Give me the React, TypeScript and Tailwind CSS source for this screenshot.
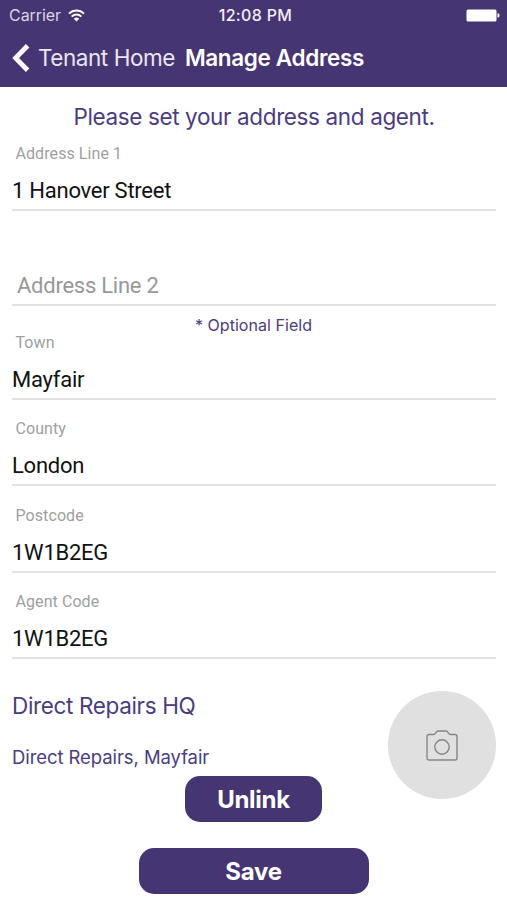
import { ChangeEvent, useState } from 'react';
import clsx from 'clsx';

type FieldProps = {
  label: string;
  name: string;
  value: string;
  onChanged: (name: string, value: string) => void;
  style?: string;
};

const Field = (props: FieldProps) => {
  const { label, name, value, onChanged, style } = props;

  const handleChange = (e: ChangeEvent<HTMLInputElement>) => {
    onChanged(name, e.target.value);
  };

  return (
    <div className={clsx('flex flex-col justify-end border-b-2 border-[#e2e2e2] font-[Roboto,sans-serif]', style)}>
      {value !== '' && (
        <label htmlFor={name} className="pl-[3.5px] text-[16px] leading-[20px] tracking-[0.08px] text-[#a0a0a0]">
          {label}
        </label>
      )}
      <input
        id={name}
        value={value}
        placeholder={label}
        onChange={handleChange}
        className="mt-[13px] mb-[4px] h-[28px] w-full text-[22px] leading-[28px] tracking-[-0.25px] text-[#111] outline-none placeholder:pl-[5px] placeholder:text-[#989898]"
      />
    </div>
  );
};

const StatusBar = () => (
  <div className="grid h-[30px] grid-cols-3 items-center pr-[7px] pl-[9px] text-[16px]">
    <div className="flex items-center gap-[7px] text-[#d9d4e6]">
      <span className="tracking-[-0.05px]">Carrier</span>
      <svg width="17" height="13" viewBox="0 0 17 13" fill="none" stroke="#fff" strokeWidth="2">
        <path d="M1 4.6a10.7 10.7 0 0 1 15 0" />
        <path d="M3.7 7.6a6.8 6.8 0 0 1 9.6 0" />
        <path d="M8.5 12.6l-2.7-2.8a3.8 3.8 0 0 1 5.4 0z" fill="#fff" stroke="none" />
      </svg>
    </div>
    <span className="pl-[2px] text-center font-medium tracking-[0.35px] whitespace-nowrap text-[#f3f1f8]">12:08 PM</span>
    <svg className="justify-self-end" width="34" height="13" viewBox="0 0 34 13" fill="#fff">
      <rect x="0.5" y="0.5" width="30" height="12" rx="1.5" />
      <path d="M31.5 4.3c1.6.3 2 1.2 2 2.2s-.4 1.900-2 2.200z" />
    </svg>
  </div>
);

const NavBar = () => (
  <div className="flex h-[56px] items-center pl-[12px] text-[22.5px]">
    <button className="flex items-center gap-[8px] text-[#e9e6f1]">
      <svg width="18" height="28" viewBox="0 0 18 28" fill="none" stroke="#fff" strokeWidth="4.800">
        <path d="M15.600 1.800L3.600 14L15.600 26.200" />
      </svg>
      <span className="tracking-[-0.45px]">Tenant Home</span>
    </button>
    <h1 className="ml-[10px] font-semibold tracking-[-0.35px] whitespace-nowrap text-white">Manage Address</h1>
  </div>
);

export default function App() {
  const [address, setAddress] = useState({
    line1: '1 Hanover Street',
    line2: '',
    town: 'Mayfair',
    county: 'London',
    postcode: '1W1B2EG',
    agentCode: '1W1B2EG',
  });

  const handleChanged = (name: string, value: string) => {
    setAddress({ ...address, [name]: value });
  };

  return (
    <div className="h-[900px] w-[507px] overflow-hidden bg-white font-[Inter,sans-serif] text-[#4b3c80]">
      <header className="h-[87px] bg-[#463573]">
        <StatusBar />
        <NavBar />
      </header>
      <main className="flex flex-col pr-[11px] pl-[12px]">
        <p className="mt-[15px] h-[30px] text-center text-[22.5px] leading-[30px] tracking-[-0.37px] whitespace-nowrap">
          Please set your address and agent.
        </p>
        <Field label="Address Line 1" name="line1" value={address.line1} onChanged={handleChanged} style="h-[79px]" />
        <Field label="Address Line 2" name="line2" value={address.line2} onChanged={handleChanged} style="h-[95px]" />
        <p className="mt-[9px] h-[20px] pr-px text-center text-[16px] leading-[20px] tracking-[0.05px]">* Optional Field</p>
        <Field label="Town" name="town" value={address.town} onChanged={handleChanged} style="h-[65px]" />
        <Field label="County" name="county" value={address.county} onChanged={handleChanged} style="h-[86px]" />
        <Field label="Postcode" name="postcode" value={address.postcode} onChanged={handleChanged} style="h-[87px]" />
        <Field label="Agent Code" name="agentCode" value={address.agentCode} onChanged={handleChanged} style="h-[86px]" />
        <section className="mt-[32px] flex h-[85px] justify-between">
          <div>
            <h2 className="text-[22.5px] leading-[29px] tracking-[-0.35px]">Direct Repairs HQ</h2>
            <p className="mt-[25px] text-[18.5px] leading-[24px] tracking-[-0.08px]">Direct Repairs, Mayfair</p>
          </div>
          <button className="flex size-[108px] items-center justify-center rounded-full bg-[#e0e0e0]">
            <svg width="32" height="31" viewBox="0 0 32 31" fill="none" stroke="#858585" strokeWidth="1.400">
              <path d="M3 4.500h4.500c2.200 0 2.200-3.500 4.500-3.500h8c2.300 0 2.300 3.500 4.500 3.500H29a2 2 0 0 1 2 2V28a2 2 0 0 1-2 2H3a2 2 0 0 1-2-2V6.500a2 2 0 0 1 2-2z" />
              <circle cx="16" cy="17" r="7.200" />
            </svg>
          </button>
        </section>
        <div className="flex flex-col items-center gap-[26px] pr-px text-[24px] font-bold tracking-[-0.3px] text-white">
          <button className="h-[46px] w-[137px] rounded-[15px] bg-[#463573] pt-px">Unlink</button>
          <button className="h-[46px] w-[230px] rounded-[15px] bg-[#463573] pt-px">Save</button>
        </div>
      </main>
    </div>
  );
}
